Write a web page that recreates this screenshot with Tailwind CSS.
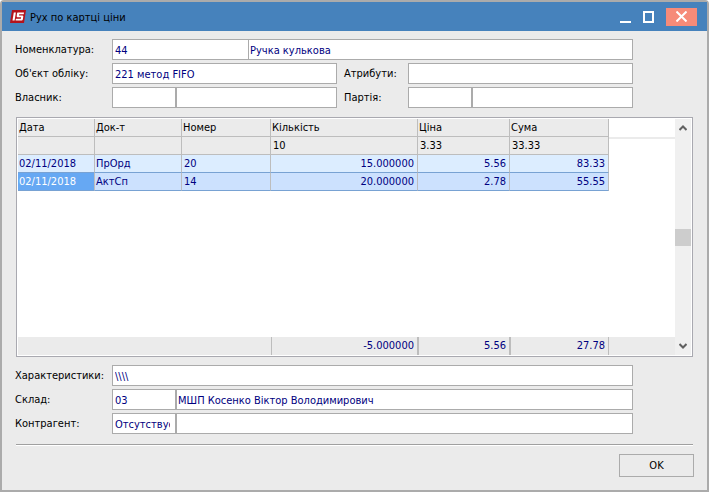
<!DOCTYPE html>
<html lang="uk">
  <head>
    <meta charset="UTF-8" />
    <meta name="viewport" content="width=device-width, initial-scale=1.0" />
    <title>Рух по картці ціни</title>
    <script src="https://cdn.jsdelivr.net/npm/@tailwindcss/browser@4"></script>
  </head>
  <body class="bg-white text-black text-[11px] leading-4 font-['Tahoma','DejaVu_Sans_Condensed','Noto_Sans',sans-serif]">
    <div class="min-h-screen flex flex-col border-2 border-[#ababab] rounded-t bg-[#ebebeb]">
      <!-- Title bar -->
      <header class="h-[29px] flex items-center bg-[#4682bc] pl-2 pr-[10px]">
        <svg class="w-4 h-[13px] mr-1" viewBox="0 0 16 13">
          <path d="M2 0H16L14 13H0Z" fill="#b5121b" />
          <path d="M3.800 2.500H5.900L4.600 10.500H2.500Z" fill="#fff" />
          <path d="M7.800 2.500H14L13.700 4.300H9.200L9 5.500H12.500Q13.400 5.600 13.300 6.500L12.800 9.500Q12.600 10.400 11.700 10.500H5.600L5.900 8.700H10.900L11.100 7.300H7.500Q6.600 7.200 6.700 6.300L7 3.400Q7.100 2.600 7.800 2.500Z" fill="#fff" />
        </svg>
        <h1 class="flex-1 pt-[2px]">Рух по картці ціни</h1>
        <div class="flex items-center">
          <button type="button" aria-label="Згорнути" class="w-[23px] h-[18px] flex items-center justify-center">
            <svg class="w-[11px] h-3" viewBox="0 0 11 12"><path d="M0 11H11" stroke="#fff" stroke-width="2" /></svg>
          </button>
          <button type="button" aria-label="Розгорнути" class="w-[23px] h-[18px] flex items-center justify-center">
            <svg class="w-[11px] h-3" viewBox="0 0 11 12"><path d="M1 1H10V11H1Z" fill="none" stroke="#fff" stroke-width="2" /></svg>
          </button>
          <button type="button" aria-label="Закрити" class="ml-[6px] w-[31px] h-[18px] flex items-center justify-center bg-[#f68b79]">
            <svg class="w-[11px] h-[11px]" viewBox="0 0 11 11"><path d="M0.500 0.500L10.500 10.500M10.500 0.500L0.500 10.500" stroke="#fff" stroke-width="2" /></svg>
          </button>
        </div>
      </header>

      <main class="flex-1 flex flex-col pl-[13px] pr-[13px] pt-2 pb-[13px]">
        <!-- Item details -->
        <div class="flex flex-col gap-[3px] mr-[61px]">
          <div class="flex">
            <label for="item" class="w-[97px] pt-[3px]">Номенклатура:</label>
            <input id="item" type="text" value="44" class="w-[137px] h-[21px] px-[2px] pt-[2px] bg-white border border-[#ababab] text-[#000080]" />
            <input type="text" aria-label="Назва номенклатури" value="Ручка кулькова" class="flex-1 min-w-0 -ml-px h-[21px] px-px pt-[2px] bg-white border border-[#ababab] text-[#000080]" />
          </div>
          <div class="flex">
            <label for="account" class="w-[97px] pt-[3px]">Об'єкт обліку:</label>
            <input id="account" type="text" value="221 метод FIFO" class="flex-1 min-w-0 h-[21px] px-[2px] pt-[2px] bg-white border border-[#ababab] text-[#000080]" />
            <label for="attrs" class="w-[71px] pl-[7px] pt-[3px]">Атрибути:</label>
            <input id="attrs" type="text" class="flex-1 min-w-0 h-[21px] px-[2px] pt-[2px] bg-white border border-[#ababab] text-[#000080]" />
          </div>
          <div class="flex">
            <label for="owner" class="w-[97px] pt-[3px]">Власник:</label>
            <div class="flex-1 flex">
              <input id="owner" type="text" class="w-16 h-[21px] px-[2px] pt-[2px] bg-white border border-[#ababab] text-[#000080]" />
              <input type="text" aria-label="Назва власника" class="flex-1 min-w-0 h-[21px] px-px pt-[2px] bg-white border border-[#ababab] text-[#000080]" />
            </div>
            <label for="batch" class="w-[71px] pl-[7px] pt-[3px]">Партія:</label>
            <div class="flex-1 flex">
              <input id="batch" type="text" class="w-16 h-[21px] px-[2px] pt-[2px] bg-white border border-[#ababab] text-[#000080]" />
              <input type="text" aria-label="Назва партії" class="flex-1 min-w-0 h-[21px] px-px pt-[2px] bg-white border border-[#ababab] text-[#000080]" />
            </div>
          </div>
        </div>

        <!-- Movements -->
        <div class="flex-1 min-h-[200px] flex mt-[9px] ml-px mr-px p-px border border-[#a9a9b0] bg-white">
          <div class="flex-1 flex flex-col justify-between">
            <table class="w-full table-fixed border-separate border-spacing-0">
              <colgroup>
                <col class="w-[77px]" />
                <col class="w-[87px]" />
                <col class="w-[89px]" />
                <col class="w-[147px]" />
                <col class="w-[92px]" />
                <col class="w-[99px]" />
                <col />
              </colgroup>
              <thead class="text-left">
                <tr class="h-[18px]">
                  <th class="p-0 pt-px pl-px font-normal bg-[#ebebeb] border-r border-b border-[#bdbdbd]">Дата</th>
                  <th class="p-0 pt-px pl-px font-normal bg-[#ebebeb] border-r border-b border-[#bdbdbd]">Док-т</th>
                  <th class="p-0 pt-px pl-px font-normal bg-[#ebebeb] border-r border-b border-[#bdbdbd]">Номер</th>
                  <th class="p-0 pt-px pl-px font-normal bg-[#ebebeb] border-r border-b border-[#bdbdbd]">Кількість</th>
                  <th class="p-0 pt-px pl-px font-normal bg-[#ebebeb] border-r border-b border-[#bdbdbd]">Ціна</th>
                  <th class="p-0 pt-px pl-px font-normal bg-[#ebebeb] border-r border-b border-[#bdbdbd]">Сума</th>
                  <td class="p-0"></td>
                </tr>
                <tr class="h-[18px]">
                  <td class="p-0 bg-[#ebebeb] border-r border-b border-[#bdbdbd]"></td>
                  <td class="p-0 bg-[#ebebeb] border-r border-b border-[#bdbdbd]"></td>
                  <td class="p-0 bg-[#ebebeb] border-r border-b border-[#bdbdbd]"></td>
                  <td class="p-0 pl-[2px] bg-[#ebebeb] border-r border-b border-[#bdbdbd]">10</td>
                  <td class="p-0 pl-[2px] bg-[#ebebeb] border-r border-b border-[#bdbdbd]">3.33</td>
                  <td class="p-0 pl-[2px] bg-[#ebebeb] border-r border-b border-[#bdbdbd]">33.33</td>
                  <td class="p-0 border-t-2 border-[#ebebeb]"></td>
                </tr>
              </thead>
              <tbody class="text-[#000080]">
                <tr class="h-[18px]">
                  <td class="p-0 pl-px bg-[#dcedff] border-r border-r-[#bdbdbd] border-b border-b-[#78a2d3]">02/11/2018</td>
                  <td class="p-0 pl-px bg-[#dcedff] border-r border-r-[#bdbdbd] border-b border-b-[#78a2d3]">ПрОрд</td>
                  <td class="p-0 pl-[2px] bg-[#dcedff] border-r border-r-[#bdbdbd] border-b border-b-[#78a2d3]">20</td>
                  <td class="p-0 pr-[3px] text-right bg-[#dcedff] border-r border-r-[#bdbdbd] border-b border-b-[#78a2d3]">15.000000</td>
                  <td class="p-0 pr-[3px] text-right bg-[#dcedff] border-r border-r-[#bdbdbd] border-b border-b-[#78a2d3]">5.56</td>
                  <td class="p-0 pr-[3px] text-right bg-[#dcedff] border-r border-r-[#bdbdbd] border-b border-b-[#78a2d3]">83.33</td>
                </tr>
                <tr class="h-[18px]">
                  <td class="p-0 pl-px bg-[#66a8f3] text-white border-r border-r-[#bdbdbd] border-b border-b-[#78a2d3]">02/11/2018</td>
                  <td class="p-0 pl-px bg-[#cce1fe] border-r border-r-[#bdbdbd] border-b border-b-[#78a2d3]">АктСп</td>
                  <td class="p-0 pl-[2px] bg-[#cce1fe] border-r border-r-[#bdbdbd] border-b border-b-[#78a2d3]">14</td>
                  <td class="p-0 pr-[3px] text-right bg-[#cce1fe] border-r border-r-[#bdbdbd] border-b border-b-[#78a2d3]">20.000000</td>
                  <td class="p-0 pr-[3px] text-right bg-[#cce1fe] border-r border-r-[#bdbdbd] border-b border-b-[#78a2d3]">2.78</td>
                  <td class="p-0 pr-[3px] text-right bg-[#cce1fe] border-r border-r-[#bdbdbd] border-b border-b-[#78a2d3]">55.55</td>
                </tr>
              </tbody>
            </table>

            <!-- Totals -->
            <table class="w-full table-fixed border-separate border-spacing-0 bg-[#ebebeb] text-right text-[#000080]">
              <tbody>
                <tr class="h-[18px]">
                  <td class="w-[254px] p-0 border-r border-[#bdbdbd]"></td>
                  <td class="w-[147px] p-0 pr-[3px] border-r-2 border-[#bdbdbd]">-5.000000</td>
                  <td class="w-[92px] p-0 pr-[3px] border-r-2 border-[#bdbdbd]">5.56</td>
                  <td class="w-[98px] p-0 pr-[3px] border-r border-[#bdbdbd]">27.78</td>
                  <td class="p-0"></td>
                </tr>
              </tbody>
            </table>
          </div>
          <!-- Scrollbar -->
          <div class="w-4 flex flex-col items-center bg-[#f0f0f0]">
            <button type="button" aria-label="Вгору" class="w-full h-[18px] flex items-center justify-center">
              <svg class="w-2 h-[6px]" viewBox="0 0 8 6"><path d="M0.500 5L4 1.500L7.500 5" fill="none" stroke="#606060" stroke-width="2" /></svg>
            </button>
            <div class="grow-[92]"></div>
            <div class="w-full h-[17px] bg-[#cdcdcd]"></div>
            <div class="grow-[91]"></div>
            <button type="button" aria-label="Вниз" class="w-full h-[18px] flex items-center justify-center">
              <svg class="w-2 h-[6px]" viewBox="0 0 8 6"><path d="M0.500 1L4 4.500L7.500 1" fill="none" stroke="#606060" stroke-width="2" /></svg>
            </button>
          </div>
        </div>

        <!-- Stock details -->
        <div class="flex flex-col gap-[3px] mt-2 mr-[61px]">
          <div class="flex">
            <label for="specs" class="w-[97px] pt-[3px]">Характеристики:</label>
            <input id="specs" type="text" value="\\\\" class="flex-1 min-w-0 h-[21px] px-[2px] pt-[2px] bg-white border border-[#ababab] text-[#000080]" />
          </div>
          <div class="flex">
            <label for="store" class="w-[97px] pt-[3px]">Склад:</label>
            <input id="store" type="text" value="03" class="w-16 h-[21px] px-[2px] pt-[2px] bg-white border border-[#ababab] text-[#000080]" />
            <input type="text" aria-label="Назва складу" value="МШП Косенко Віктор Володимирович" class="flex-1 min-w-0 h-[21px] px-px pt-[2px] bg-white border border-[#ababab] text-[#000080]" />
          </div>
          <div class="flex">
            <label for="partner" class="w-[97px] pt-[3px]">Контрагент:</label>
            <input id="partner" type="text" value="Отсутствует" class="w-16 h-[21px] pl-[2px] pr-[5px] pt-[2px] bg-white border border-[#ababab] text-[#000080]" />
            <input type="text" aria-label="Назва контрагента" class="flex-1 min-w-0 h-[21px] px-px pt-[2px] bg-white border border-[#ababab] text-[#000080]" />
          </div>
        </div>

        <div class="mt-[10px] ml-px mr-px h-[2px] border-t border-[#a0a0a0] bg-white"></div>
        <button type="button" class="self-end mt-2 w-[75px] h-[23px] border border-[#ababab] bg-[#ebebeb]">OK</button>
      </main>
    </div>
  </body>
</html>
